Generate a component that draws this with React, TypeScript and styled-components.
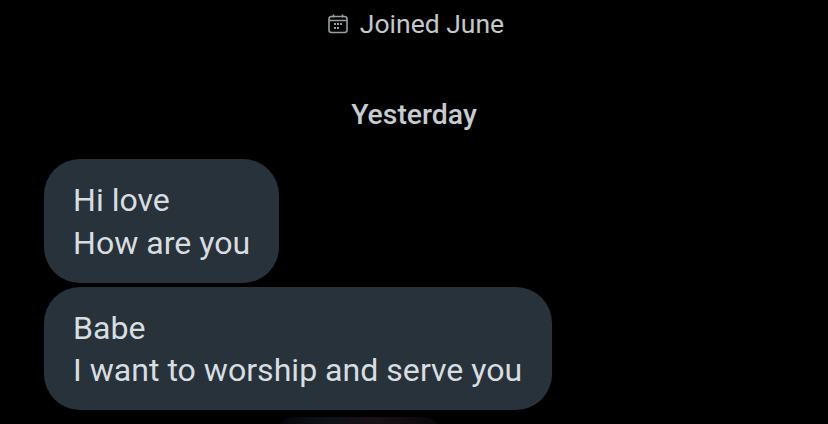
import React from 'react';
import styled, { createGlobalStyle } from 'styled-components';

const GlobalStyle = createGlobalStyle`
  html, body {
    margin: 0;
    padding: 0;
    background: #000;
    overflow: hidden;
  }
`;

const Page = styled.div`
  width: 828px;
  height: 424px;
  overflow: hidden;
  background: #000;
  font-family: Roboto, "Liberation Sans", sans-serif;
`;

const JoinedRow = styled.div`
  height: 47px;
  display: flex;
  align-items: center;
  justify-content: center;
  gap: 11px;
  padding-left: 3px;
  color: #c4c8cb;
  font-size: 26.5px;
`;

const DayLabel = styled.div`
  margin-top: 48px;
  height: 40px;
  line-height: 40px;
  text-align: center;
  color: #c6ccd1;
  font-size: 28.4px;
  font-weight: 500;
`;

const Messages = styled.div`
  margin-top: 24px;
  padding-left: 44px;
  display: flex;
  flex-direction: column;
  align-items: flex-start;
  gap: 4px;
`;

const Bubble = styled.div<{ $width: number }>`
  width: ${(p) => p.$width}px;
  box-sizing: border-box;
  height: 123.5px;
  padding: 20px 0 0 29px;
  background: #27323b;
  border-radius: 36px;
  color: #d8dde0;
  font-size: 32.1px;
  line-height: 42.5px;
`;

const Attachment = styled.div`
  margin: 7px 0 0 275px;
  width: 167px;
  height: 20px;
  border-radius: 34px 34px 0 0;
  background: linear-gradient(90deg, #050508 0%, #0e1219 30%, #1a1015 62%, #08070a 100%);
`;

const CalendarIcon = () => (
  <svg width="22" height="22" viewBox="0 0 22 22" fill="none" stroke="#9a9ea1" strokeWidth="1.6">
    <rect x="2" y="3.5" width="18" height="16" rx="2.5" />
    <path d="M2 7.5h18M6.5 1.5v3M15.5 1.5v3" />
    <g fill="#9a9ea1" stroke="none">
      <rect x="7" y="10" width="2" height="2" />
      <rect x="10" y="10" width="2" height="2" />
      <rect x="13" y="10" width="2" height="2" />
      <rect x="7" y="14" width="2" height="2" />
      <rect x="10" y="14" width="2" height="2" />
    </g>
  </svg>
);

export default function App() {
  return (
    <Page>
      <GlobalStyle />
      <JoinedRow>
        <CalendarIcon />
        <span>Joined June</span>
      </JoinedRow>
      <DayLabel>Yesterday</DayLabel>
      <Messages>
        <Bubble $width={235}>
          Hi love
          <br />
          How are you
        </Bubble>
        <Bubble $width={508}>
          Babe
          <br />I want to worship and serve you
        </Bubble>
      </Messages>
      <Attachment />
    </Page>
  );
}
